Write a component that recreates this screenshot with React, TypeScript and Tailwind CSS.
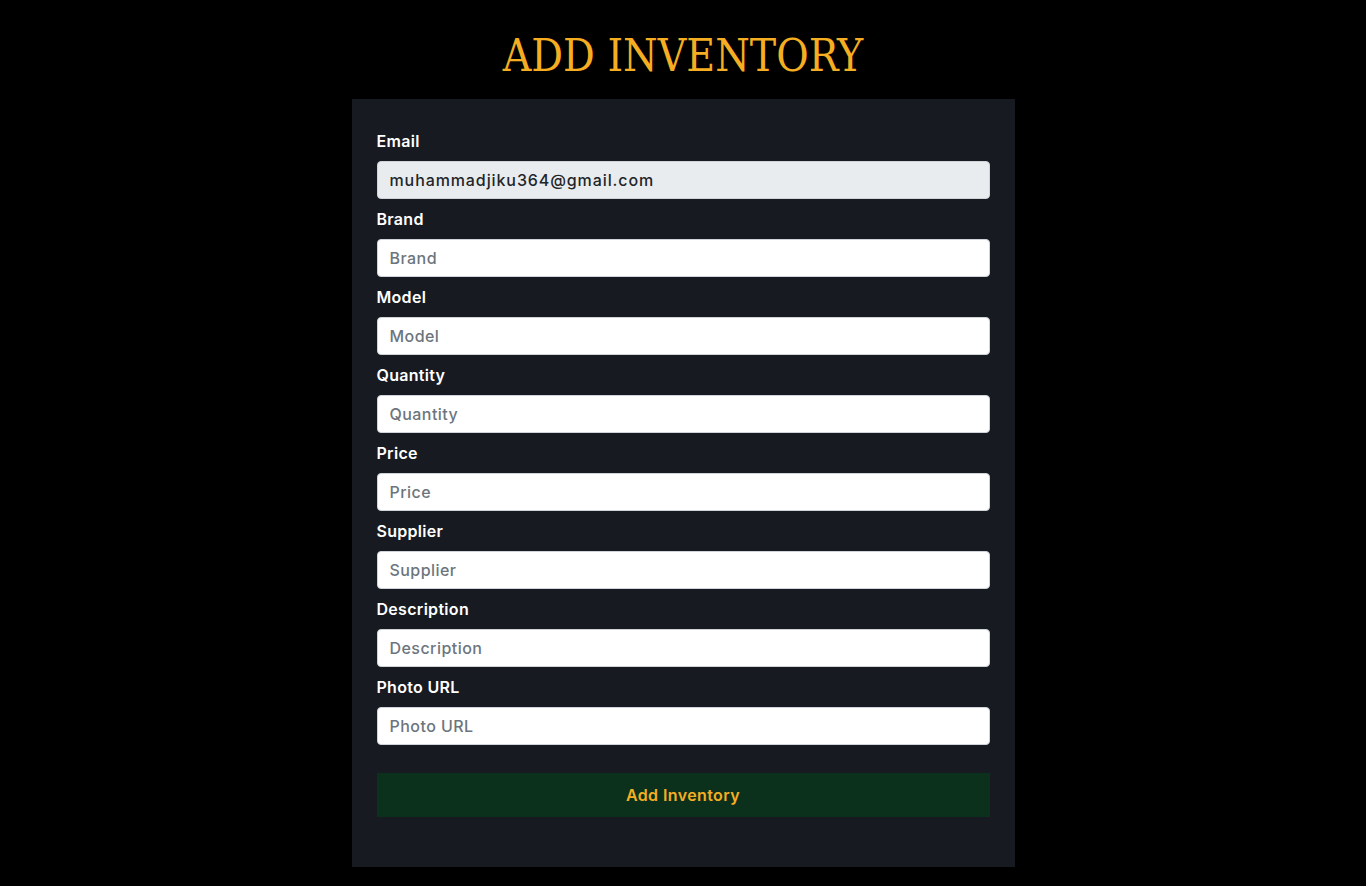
import React from "react";

const fields = [
  "Brand",
  "Model",
  "Quantity",
  "Price",
  "Supplier",
  "Description",
  "Photo URL",
];

export default function App() {
  return (
    <div className="min-h-[886px] bg-black flex flex-col items-center" style={{ fontFamily: "Inter, 'Open Sans', sans-serif" }}>
      <h1
        className="mt-[28px] mb-[15px] text-[44px] leading-[56px] text-[#f5ae21]"
        style={{ fontFamily: "'DejaVu Serif Condensed', 'DejaVu Serif', serif", fontStretch: "condensed" }}
      >
        ADD INVENTORY
      </h1>
      <div className="w-[663px] bg-[#171a21] px-[25px] pt-[30px] pb-[50px]">
        <div className="flex flex-col">
          <label className="text-white font-semibold text-[16px] leading-[24px] mb-2 tracking-[0.3px]">Email</label>
          <input
            disabled
            value="muhammadjiku364@gmail.com"
            readOnly
            className="h-[38px] w-full rounded-[4px] border border-[#ced4da] bg-[#e9ecef] px-[12px] text-[16px] font-medium text-[#212529] tracking-[0.9px] mb-2 outline-none"
          />
          {fields.map((f) => (
            <React.Fragment key={f}>
              <label className="text-white font-semibold text-[16px] leading-[24px] mb-2 tracking-[0.3px]">{f}</label>
              <input
                placeholder={f}
                className="h-[38px] w-full rounded-[4px] border border-[#ced4da] bg-white px-[12px] text-[16px] font-medium text-[#212529] tracking-[0.45px] placeholder:text-[#6c757d] mb-2 outline-none"
              />
            </React.Fragment>
          ))}
          <button className="mt-[20px] h-[44px] w-full bg-[#0b311c] text-[#f5ae21] font-semibold text-[16px] tracking-[0.4px]">
            Add Inventory
          </button>
        </div>
      </div>
    </div>
  );
}
